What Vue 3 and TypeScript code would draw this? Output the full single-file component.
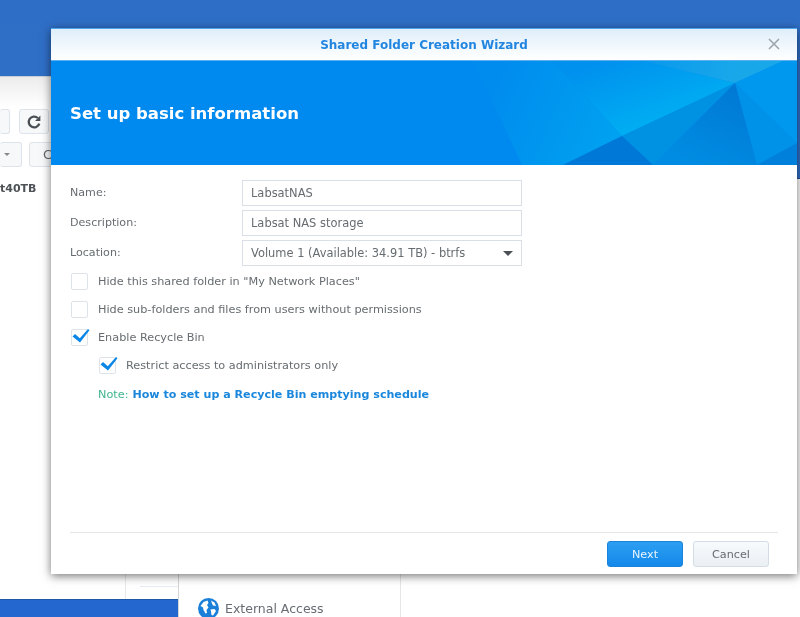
<script setup lang="ts">
const wizardTitle = 'Shared Folder Creation Wizard'

interface Field {
  label: string
  value: string
  select?: boolean
}

interface Option {
  label: string
  checked: boolean
  nested?: boolean
}

const fields: Field[] = [
  { label: 'Name:', value: 'LabsatNAS' },
  { label: 'Description:', value: 'Labsat NAS storage' },
  { label: 'Location:', value: 'Volume 1 (Available: 34.91 TB) - btrfs', select: true },
]

const options: Option[] = [
  { label: 'Hide this shared folder in "My Network Places"', checked: false },
  { label: 'Hide sub-folders and files from users without permissions', checked: false },
  { label: 'Enable Recycle Bin', checked: true },
  { label: 'Restrict access to administrators only', checked: true, nested: true },
]
</script>

<template>
  <div class="desktop">
    <!-- windows behind the wizard -->
    <div class="back-window">
      <div class="tool-row">
        <span class="tool-btn tool-first"></span>
        <span class="tool-btn tool-refresh">
          <svg width="16" height="16" viewBox="0 0 16 16">
            <path d="M13.300 9.600A5.400 5.400 0 1 1 11.800 4" fill="none" stroke="#4a4f55" stroke-width="2.300" />
            <path d="M14.400 1.400V7H9Z" fill="#4a4f55" />
          </svg>
        </span>
      </div>
      <div class="tool-row tool-row-two">
        <span class="tool-btn tool-drop"><i class="mini-caret"></i></span>
        <span class="tool-btn tool-c">C</span>
      </div>
      <div class="volume-name">t40TB</div>
    </div>
    <div class="back-right"></div>
    <div class="back-line"></div>
    <div class="back-rule"></div>
    <div class="taskbar"></div>
    <div class="side-panel">
      <svg class="globe" width="21" height="21" viewBox="0 0 21 21">
        <circle cx="10.500" cy="10.500" r="10.500" fill="#1a7fd8" />
        <path d="M2.500 8l3-4 4-1.500 1 2.500-1.500 2 1.500 2.500-2 2.500 .5 3-1.500 .5-2-3.500-.5-2.500zM13 2.500l3.500 2 1.500 3.500-3-.5-1-2zM12.500 11.500l4-.5 1.500 2-3 4.500-1.500-.5-.5-3.500z" fill="#fff" />
      </svg>
      <span class="side-label">External Access</span>
    </div>

    <!-- wizard -->
    <section class="wizard">
      <header class="title-bar">
        <span class="title">{{ wizardTitle }}</span>
        <svg class="close" width="12" height="12" viewBox="0 0 12 12">
          <path d="M1 1l10 10M11 1L1 11" stroke="#9ea5ab" stroke-width="1.600" fill="none" />
        </svg>
      </header>

      <div class="banner">
        <svg class="banner-art" width="400" height="104" viewBox="0 0 400 104">
          <defs>
            <linearGradient id="facetA" gradientUnits="userSpaceOnUse" x1="100" y1="20" x2="225" y2="75">
              <stop offset="0" stop-color="#008cee" />
              <stop offset="1" stop-color="#00a2f0" />
            </linearGradient>
            <linearGradient id="facetB" gradientUnits="userSpaceOnUse" x1="200" y1="0" x2="225" y2="75">
              <stop offset="0" stop-color="#0090ee" />
              <stop offset="1" stop-color="#00aef2" />
            </linearGradient>
            <linearGradient id="facetD" gradientUnits="userSpaceOnUse" x1="246" y1="0" x2="338" y2="15">
              <stop offset="0" stop-color="#0a98ec" />
              <stop offset="1" stop-color="#18a8ea" />
            </linearGradient>
            <linearGradient id="facetE" gradientUnits="userSpaceOnUse" x1="338" y1="22" x2="300" y2="104">
              <stop offset="0" stop-color="#0078d4" />
              <stop offset="1" stop-color="#008ce2" />
            </linearGradient>
          </defs>
          <polygon points="76,0 156,0 225,75 166,104 125,104" fill="url(#facetA)" />
          <polygon points="156,0 246,0 338,22 225,75" fill="url(#facetB)" />
          <polygon points="246,0 386,0 338,22" fill="url(#facetD)" />
          <polygon points="338,22 386,0 400,0 400,82" fill="#0098ee" />
          <polygon points="338,22 400,82 360,104" fill="#0092e8" />
          <polygon points="225,75 338,22 256,104" fill="#0092e2" />
          <polygon points="225,75 256,104 166,104" fill="#0078d8" />
          <polygon points="338,22 360,104 256,104" fill="url(#facetE)" />
          <polygon points="360,104 400,82 400,104" fill="#0080da" />
        </svg>
        <h1 class="banner-title">Set up basic information</h1>
      </div>

      <div class="body">
        <div class="fields">
          <div v-for="field in fields" :key="field.label" class="field">
            <label class="field-label">{{ field.label }}</label>
            <div class="input">
              <span>{{ field.value }}</span>
              <i v-if="field.select" class="caret"></i>
            </div>
          </div>
        </div>

        <div class="options">
          <div
            v-for="opt in options"
            :key="opt.label"
            class="option"
            :class="{ nested: opt.nested }"
          >
            <span class="box">
              <svg v-if="opt.checked" class="tick" width="20" height="17" viewBox="0 0 20 17">
                <path d="M2.500 9.500L5 7l4.800 4.200L18 2l1.500 1.300L10 15.500z" fill="#0a86e6" />
              </svg>
            </span>
            <span class="option-label">{{ opt.label }}</span>
          </div>
        </div>

        <p class="note">
          <span class="note-tag">Note:</span>
          <a class="note-link">How to set up a Recycle Bin emptying schedule</a>
        </p>
      </div>

      <footer class="footer">
        <button class="btn btn-next">Next</button>
        <button class="btn btn-cancel">Cancel</button>
      </footer>
    </section>
  </div>
</template>

<style>
html,
body {
  margin: 0;
  overflow: hidden;
}
</style>

<style scoped>
.desktop {
  position: relative;
  width: 800px;
  height: 617px;
  overflow: hidden;
  background: linear-gradient(180deg, #2f6ec6 0, #2f6fc6 76px, #fff 76px);
  font-family: "DejaVu Sans", Verdana, sans-serif;
  font-size: 11.250px;
  filter: blur(0.5px);
}

.back-window {
  position: absolute;
  left: 0;
  top: 76px;
  width: 60px;
  height: 500px;
  background: linear-gradient(180deg, #ececec 0, #fff 30px);
  border-top: 1px solid #c9ced4;
  box-sizing: border-box;
}

.back-right {
  position: absolute;
  left: 780px;
  top: 76px;
  width: 20px;
  height: 102px;
  background: #2f6fc6;
  border-bottom: 1px solid #1f5296;
}

.tool-row {
  position: absolute;
  top: 32px;
  left: 0;
  display: flex;
  gap: 9px;
}

.tool-row-two {
  top: 65px;
  gap: 7px;
}

.tool-btn {
  display: flex;
  align-items: center;
  height: 25px;
  box-sizing: border-box;
  border: 1px solid #dce3ea;
  border-left: 0;
  border-radius: 3px;
  background: #f6f8fa;
  color: #666;
  font-size: 13px;
}

.tool-first {
  width: 10px;
}

.tool-refresh {
  width: 30px;
  border-left: 1px solid #dce3ea;
  justify-content: center;
}

.tool-drop {
  width: 22px;
  padding-left: 4px;
}

.tool-c {
  width: 30px;
  border-left: 1px solid #dce3ea;
  padding-left: 13px;
}

.mini-caret {
  width: 0;
  height: 0;
  border: 3px solid transparent;
  border-top: 3px solid #888;
  margin-top: 3px;
}

.volume-name {
  position: absolute;
  top: 105px;
  left: 0;
  font-weight: 700;
  font-size: 11px;
  color: #4d5257;
}

.back-line {
  position: absolute;
  left: 125px;
  top: 570px;
  width: 1px;
  height: 30px;
  background: #e6e8ea;
}

.back-rule {
  position: absolute;
  left: 140px;
  top: 586px;
  width: 40px;
  height: 1px;
  background: #e6ecf4;
}

.taskbar {
  position: absolute;
  left: 0;
  top: 599px;
  width: 178px;
  height: 18px;
  background: #2468cf;
  border-top: 1px solid #1d57a8;
  box-sizing: border-box;
}

.side-panel {
  position: absolute;
  left: 178px;
  top: 570px;
  width: 223px;
  height: 47px;
  background: #fff;
  border-left: 1px solid #d4d6d8;
  border-right: 1px solid #e4e6e8;
  box-sizing: border-box;
}

.globe {
  position: absolute;
  left: 19px;
  top: 28px;
}

.side-label {
  position: absolute;
  left: 46px;
  top: 31px;
  font-size: 12.500px;
  color: #666c72;
}

.wizard {
  position: absolute;
  left: 51px;
  top: 28px;
  width: 746px;
  height: 546px;
  display: flex;
  flex-direction: column;
  background: #fff;
  box-shadow: 0 2px 9px rgba(0, 0, 0, 0.55);
}

.title-bar {
  position: relative;
  height: 33px;
  flex: none;
  display: flex;
  align-items: center;
  justify-content: center;
  box-sizing: border-box;
  background: linear-gradient(180deg, #dfeefa 0, #fff 100%);
  border-top: 1px solid #4da5ee;
  border-bottom: 1px solid #5cb0f0;
}

.title {
  font-weight: 700;
  font-size: 12px;
  color: #2286e0;
}

.close {
  position: absolute;
  right: 17px;
  top: 9px;
}

.banner {
  position: relative;
  height: 104px;
  flex: none;
  display: flex;
  align-items: center;
  background: #0089ee;
  overflow: hidden;
}

.banner-art {
  position: absolute;
  right: 0;
  top: 0;
}

.banner-title {
  position: relative;
  margin: 0 0 0 19px;
  font-size: 16.500px;
  font-weight: 700;
  color: #fff;
}

.body {
  flex: 1;
  padding: 15px 19px 0;
}

.fields {
  display: flex;
  flex-direction: column;
  gap: 4px;
}

.field {
  display: flex;
  align-items: center;
}

.field-label {
  width: 172px;
  margin-top: -2px;
  font-size: 11.100px;
  color: #666c70;
}

.input {
  width: 280px;
  height: 26px;
  box-sizing: border-box;
  display: flex;
  align-items: center;
  justify-content: space-between;
  padding: 0 8px;
  border: 1px solid #d8dfe6;
  font-size: 11.450px;
  color: #666c70;
}

.caret {
  width: 0;
  height: 0;
  border: 5px solid transparent;
  border-top: 5px solid #4a5055;
  border-bottom: 0;
}

.options {
  margin-top: 1px;
}

.option {
  display: flex;
  align-items: center;
  height: 28px;
  padding-left: 1px;
}

.nested {
  padding-left: 29px;
}

.box {
  position: relative;
  width: 17px;
  height: 17px;
  flex: none;
  box-sizing: border-box;
  border: 1px solid #dde3e9;
  border-radius: 2px;
  margin-right: 10px;
}

.tick {
  position: absolute;
  left: -2px;
  top: -3px;
  overflow: visible;
}

.option-label {
  color: #666c70;
}

.note {
  display: flex;
  gap: 4px;
  margin: 9px 0 0 28px;
}

.note-tag {
  color: #3fb58c;
}

.note-link {
  font-weight: 700;
  font-size: 11.100px;
  color: #1a87dc;
}

.footer {
  flex: none;
  height: 42px;
  box-sizing: border-box;
  margin: 0 19px;
  padding: 8px 9px 0 0;
  display: flex;
  justify-content: flex-end;
  align-items: flex-start;
  gap: 10px;
  border-top: 1px solid #e6e6e6;
}

.btn {
  width: 76px;
  height: 26px;
  padding: 0;
  border-radius: 3px;
  font-family: inherit;
  font-size: 11.200px;
}

.btn-next {
  background: linear-gradient(180deg, #2c9ff2, #1488ea);
  border: 1px solid #1a84dc;
  color: #e8f4ff;
}

.btn-cancel {
  background: linear-gradient(180deg, #f8fafc, #eaeff4);
  border: 1px solid #d4dde6;
  color: #666c72;
}
</style>
